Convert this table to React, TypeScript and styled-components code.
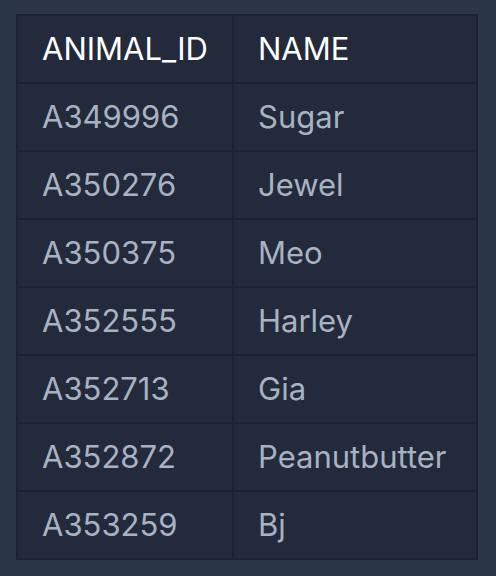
import * as React from "react";
import styled, { createGlobalStyle } from "styled-components";

const GlobalStyle = createGlobalStyle`
  html, body {
    margin: 0;
    padding: 0;
    background: #2b3647;
  }
  body {
    font-family: Inter, "Noto Sans", sans-serif;
  }
`;

const Page = styled.div`
  padding: 14px 18px 16px 16px;
`;

const Table = styled.table`
  border-collapse: collapse;
  width: 462px;
  background: #222a3b;
  border: 2px solid #1b2231;
  table-layout: fixed;
`;

const Cell = styled.td<{ $head?: boolean; $wide?: boolean }>`
  height: 64px;
  padding: 0 0 2px 24px;
  border: 2px solid #1b2231;
  font-size: 31px;
  font-weight: 400;
  line-height: 1;
  white-space: nowrap;
  color: ${p => (p.$head ? "#ffffff" : "#a8b2c1")};
  width: ${p => (p.$wide ? "auto" : "190px")};
  text-align: left;
  vertical-align: middle;
`;

const rows: [string, string][] = [
  ["A349996", "Sugar"],
  ["A350276", "Jewel"],
  ["A350375", "Meo"],
  ["A352555", "Harley"],
  ["A352713", "Gia"],
  ["A352872", "Peanutbutter"],
  ["A353259", "Bj"],
];

export default function App() {
  return (
    <Page>
      <GlobalStyle />
      <Table>
        <thead>
          <tr>
            <Cell as="th" $head>
              ANIMAL_ID
            </Cell>
            <Cell as="th" $head $wide>
              NAME
            </Cell>
          </tr>
        </thead>
        <tbody>
          {rows.map(([id, name]) => (
            <tr key={id}>
              <Cell>{id}</Cell>
              <Cell $wide>{name}</Cell>
            </tr>
          ))}
        </tbody>
      </Table>
    </Page>
  );
}
